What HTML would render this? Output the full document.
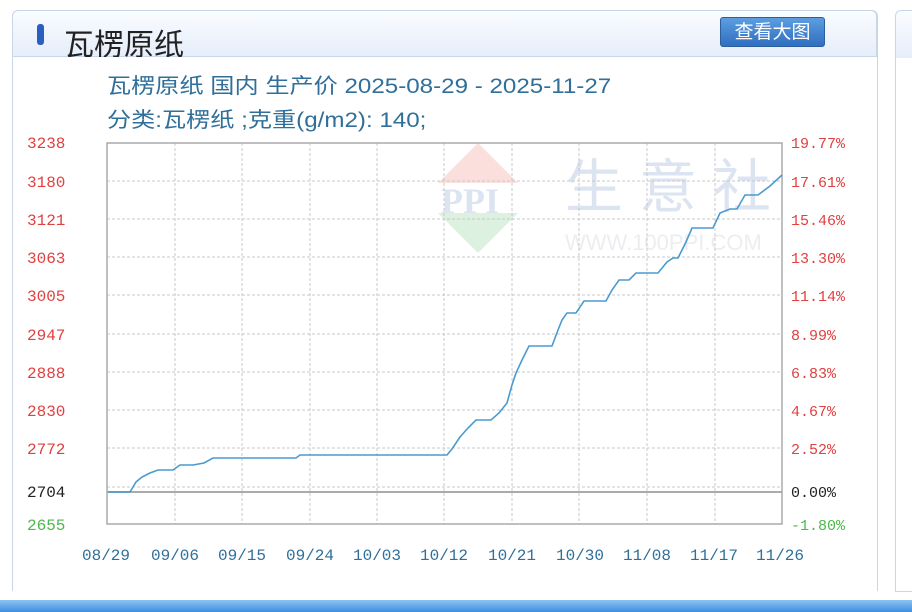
<!DOCTYPE html>
<html><head><meta charset="utf-8"><style>
body{margin:0;width:912px;height:612px;background:#fff;position:relative;overflow:hidden;font-family:"Liberation Sans","Noto Sans CJK SC",sans-serif}
.panel{position:absolute;left:12px;top:10px;width:864px;height:580px;border:1px solid #c9d6ea;border-bottom:none;border-radius:6px 6px 0 0}
.head{position:absolute;left:12px;top:10px;width:865px;height:47px;background:linear-gradient(#fafcff,#e6eefa);border:1px solid #c9d6ea;border-radius:6px 6px 0 0;box-sizing:border-box}
.bar{position:absolute;left:37px;top:24px;width:7px;height:21px;background:#2a5fc0;border-radius:3px}
.title{position:absolute;left:64px;top:26px;font-size:30px;color:#222;height:31px;overflow:hidden;line-height:40px}
.btn{position:absolute;left:720px;top:17px;width:105px;height:30px;background:linear-gradient(#5d9de0,#2f6fbf);border:1px solid #2d5f9e;border-radius:3px;color:#fff;font-size:19px;text-align:center;line-height:30px;box-sizing:border-box}
.side{position:absolute;left:895px;top:10px;width:30px;height:580px;border:1px solid #c9d6ea;border-radius:6px 0 0 0;background:linear-gradient(#fafcff 0,#e6eefa 47px,#fff 47px)}
.t1,.t2{position:absolute;left:107px;font-size:21px;color:#2f6f9a;transform:scaleX(1.15);transform-origin:left;white-space:nowrap}
.t1{top:70px}.t2{top:104px}
.bottom{position:absolute;left:0;top:600px;width:912px;height:12px;background:linear-gradient(#8fc2f0,#3d8fe0)}
svg{position:absolute;left:0;top:0}
</style></head><body>
<div class="panel"></div>
<div class="head"></div>
<div class="bar"></div>
<div class="title">瓦楞原纸</div>
<div class="btn">查看大图</div>
<div class="side"></div>
<div class="t1">瓦楞原纸 国内 生产价 2025-08-29 - 2025-11-27</div>
<div class="t2">分类:瓦楞纸 ;克重(g/m2): 140;</div>
<svg width="912" height="612" font-family="Liberation Mono,monospace">
<g opacity="0.35">
<polygon points="478,143 438,183 518,183" fill="#f2a5a0"/>
<polygon points="478,253 438,213 518,213" fill="#9fd8a8"/>
<text x="441" y="213" font-size="36" font-family="Liberation Serif,serif" font-weight="bold" fill="#9fb5d8">PPI</text>
<text x="565" y="207" font-size="58" font-family="Noto Sans CJK SC,sans-serif" fill="#9fb5d8" letter-spacing="16">生意社</text>
<text x="565" y="250" font-size="22" font-family="Liberation Sans,sans-serif" fill="#c8cdd6">WWW.100PPI.COM</text>
</g>
<g stroke="#c8c8c8" stroke-dasharray="3,2" stroke-width="1">
<line x1="107" x2="782" y1="181" y2="181"/><line x1="107" x2="782" y1="219" y2="219"/><line x1="107" x2="782" y1="257" y2="257"/><line x1="107" x2="782" y1="295" y2="295"/><line x1="107" x2="782" y1="334" y2="334"/><line x1="107" x2="782" y1="372" y2="372"/><line x1="107" x2="782" y1="410" y2="410"/><line x1="107" x2="782" y1="448" y2="448"/><line x1="107" x2="782" y1="487" y2="487"/>
<line y1="143" y2="524" x1="175" x2="175"/><line y1="143" y2="524" x1="242" x2="242"/><line y1="143" y2="524" x1="310" x2="310"/><line y1="143" y2="524" x1="377" x2="377"/><line y1="143" y2="524" x1="444" x2="444"/><line y1="143" y2="524" x1="512" x2="512"/><line y1="143" y2="524" x1="579" x2="579"/><line y1="143" y2="524" x1="647" x2="647"/><line y1="143" y2="524" x1="715" x2="715"/>
</g>
<rect x="107" y="143" width="675" height="381" fill="none" stroke="#aaa" stroke-width="1.5"/>
<line x1="107" x2="782" y1="492" y2="492" stroke="#aaa" stroke-width="2"/>
<polyline fill="none" stroke="#4a9ad0" stroke-width="1.6" points="108,492 130,492 136,482 142,477 150,473 158,470 173,470 180,465 193,465 204,463 213,458 296,458 300,455 447,455 452,449 460,437 468,428 476,420 491,420 499,413 507,403 512,385 516,373 522,360 529,346 552,346 558,330 562,320 567,313 576,313 584,301 606,301 612,290 619,280 629,280 636,273 658,273 667,262 673,258 678,258 686,242 692,228 713,228 720,213 730,209 737,209 745,195 758,195 770,186 782,175"/>
<g font-size="16" text-anchor="start">
<text x="27" y="148" fill="#e04040">3238</text><text x="27" y="187" fill="#e04040">3180</text><text x="27" y="225" fill="#e04040">3121</text><text x="27" y="263" fill="#e04040">3063</text><text x="27" y="301" fill="#e04040">3005</text><text x="27" y="340" fill="#e04040">2947</text><text x="27" y="378" fill="#e04040">2888</text><text x="27" y="416" fill="#e04040">2830</text><text x="27" y="454" fill="#e04040">2772</text><text x="27" y="497" fill="#222">2704</text><text x="27" y="530" fill="#4cb84c">2655</text>
</g>
<g font-size="15" text-anchor="start">
<text x="791" y="148" fill="#e04040">19.77%</text><text x="791" y="187" fill="#e04040">17.61%</text><text x="791" y="225" fill="#e04040">15.46%</text><text x="791" y="263" fill="#e04040">13.30%</text><text x="791" y="301" fill="#e04040">11.14%</text><text x="791" y="340" fill="#e04040">8.99%</text><text x="791" y="378" fill="#e04040">6.83%</text><text x="791" y="416" fill="#e04040">4.67%</text><text x="791" y="454" fill="#e04040">2.52%</text><text x="791" y="497" fill="#222">0.00%</text><text x="791" y="530" fill="#4cb84c">-1.80%</text>
</g>
<g font-size="16" fill="#2f6f9a" text-anchor="middle">
<text x="106" y="560">08/29</text><text x="175" y="560">09/06</text><text x="242" y="560">09/15</text><text x="310" y="560">09/24</text><text x="377" y="560">10/03</text><text x="444" y="560">10/12</text><text x="512" y="560">10/21</text><text x="580" y="560">10/30</text><text x="647" y="560">11/08</text><text x="714" y="560">11/17</text><text x="780" y="560">11/26</text>
</g>
</svg>
<div class="bottom"></div>
</body></html>
